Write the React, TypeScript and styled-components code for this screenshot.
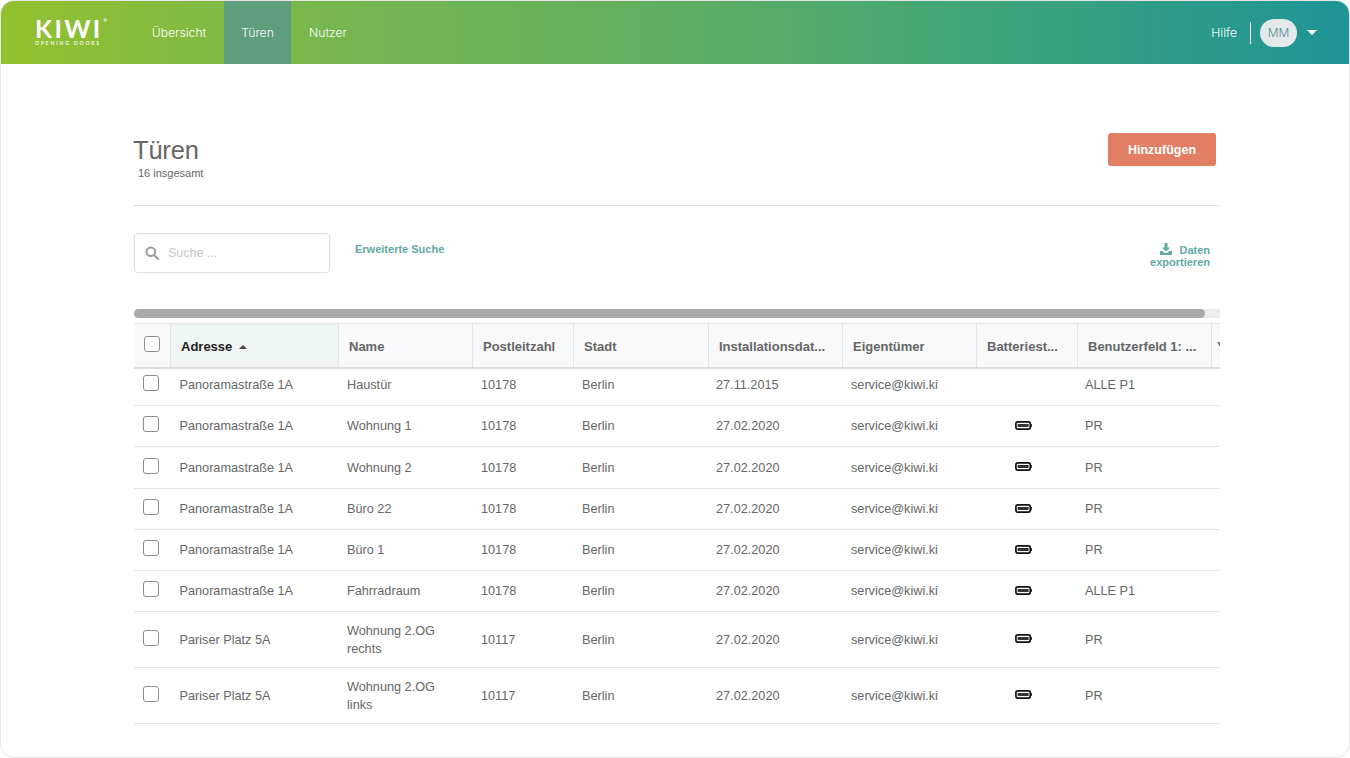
import React from "react";
import styled, { createGlobalStyle } from "styled-components";

const Global = createGlobalStyle`
  html, body { margin: 0; padding: 0; background: #fff; }
  * { box-sizing: border-box; }
  body { font-family: "Liberation Sans", Arial, sans-serif; }
`;

const Frame = styled.div`
  width: 1350px;
  height: 758px;
  border: 1px solid #e6e6e6;
  border-radius: 14px;
  overflow: hidden;
  background: #fff;
  display: flex;
  flex-direction: column;
`;

const Header = styled.header`
  flex: none;
  height: 63px;
  background: linear-gradient(90deg, #93c12f 0%, #76b64f 25%, #60ae62 50%, #3ca47b 75%, #1e9497 100%);
  display: flex;
  align-items: stretch;
  padding-left: 34px;
  padding-right: 32px;
  font-family: "Inter", "Lato", sans-serif;
  color: #fff;
  font-size: 12.2px;
  font-weight: 300;
`;

const Logo = styled.div`
  width: 99px;
  display: flex;
  flex-direction: column;
  padding-top: 15px;
`;

const LogoWord = styled.div`
  font-family: "Lato", sans-serif;
  font-size: 25px;
  line-height: 24px;
  font-weight: 700;
  letter-spacing: 2.3px;
  display: flex;
  align-items: flex-start;
  height: 24px;
`;

const LogoMark = styled.span`
  font-size: 4px;
  line-height: 10px;
  letter-spacing: 0;
  margin-left: 1px;
`;

const LogoTag = styled.div`
  font-family: "Lato", sans-serif;
  font-size: 5px;
  line-height: 6px;
  font-weight: 700;
  letter-spacing: 1.85px;
  white-space: nowrap;
  opacity: 0.9;
`;

const Nav = styled.nav`
  display: flex;
`;

const NavItem = styled.a<{ $active?: boolean; $width: number }>`
  display: flex;
  align-items: center;
  justify-content: center;
  width: ${(p) => p.$width}px;
  background: ${(p) => (p.$active ? "#5e9e7c" : "transparent")};
`;

const HeaderRight = styled.div`
  margin-left: auto;
  display: flex;
  align-items: center;
`;

const Divider = styled.span`
  width: 1px;
  height: 22px;
  background: #fff;
  margin: 0 9px 0 13px;
`;

const Avatar = styled.div`
  width: 37px;
  height: 28px;
  border-radius: 14px;
  background: #e6e9e9;
  color: #4f8f92;
  display: flex;
  align-items: center;
  justify-content: center;
  font-size: 12px;
`;

const Caret = styled.span`
  margin-left: 10px;
  width: 0;
  height: 0;
  border-left: 5px solid transparent;
  border-right: 5px solid transparent;
  border-top: 5px solid #fff;
`;

const Main = styled.main`
  margin-left: 133px;
  width: 1086px;
  padding-top: 69px;
  color: #666;
`;

const TitleRow = styled.div`
  display: flex;
  justify-content: space-between;
  height: 73px;
  border-bottom: 1px solid #dfdfdf;
`;

const Title = styled.h1`
  margin: 0 0 0 -1px;
  font-size: 25.5px;
  line-height: 34px;
  font-weight: 400;
  color: #666;
  letter-spacing: -0.2px;
`;

const Count = styled.div`
  margin-left: 4px;
  font-size: 11px;
  line-height: 13px;
  color: #666;
`;

const AddButton = styled.button`
  width: 108px;
  height: 33px;
  margin-right: 4px;
  border: 0;
  border-radius: 3px;
  background: #e17e63;
  color: #fff;
  font: bold 12.5px "Liberation Sans", Arial, sans-serif;
`;

const Tools = styled.div`
  display: flex;
  align-items: flex-start;
  padding-top: 27px;
  height: 103px;
`;

const SearchBox = styled.div`
  width: 196px;
  height: 40px;
  border: 1px solid #dedede;
  border-radius: 4px;
  display: flex;
  align-items: center;
  padding-left: 10px;
  gap: 9px;
  color: #c4c4c4;
  font-size: 12.5px;
`;

const AdvancedLink = styled.a`
  margin-left: 25px;
  margin-top: 9px;
  font-size: 11px;
  line-height: 14px;
  font-weight: 700;
  color: #5fa9a3;
`;

const ExportLink = styled.a`
  margin-left: auto;
  margin-right: 10px;
  margin-top: 10px;
  width: 70px;
  text-align: right;
  font-size: 11px;
  line-height: 11.5px;
  font-weight: 700;
  color: #5fa9a3;
`;

const ExportIcon = styled.svg`
  vertical-align: -1px;
  margin-right: 7px;
`;

const ScrollTrack = styled.div`
  height: 9px;
  border-radius: 5px 0 0 5px;
  background: #ececec;
`;

const ScrollThumb = styled.div`
  width: 1071px;
  height: 9px;
  border-radius: 5px;
  background: #a9a9a9;
`;

const TableClip = styled.div`
  margin-top: 5px;
  overflow: hidden;
`;

const columns = "37px 168px 134px 101px 135px 134px 134px 101px 134px 40px";

const HeadRow = styled.div`
  display: grid;
  grid-template-columns: ${columns};
  width: 1218px;
  height: 46px;
  background: #f8f9fa;
  border-top: 1px solid #e6e6e6;
  border-bottom: 2px solid #dedede;
`;

const HeadCell = styled.div<{ $sorted?: boolean; $pad?: number }>`
  display: flex;
  align-items: center;
  gap: 7px;
  padding: 2px 0 0 ${(p) => p.$pad ?? 10}px;
  border-right: 1px solid #e2e5e6;
  background: ${(p) => (p.$sorted ? "#eef5f3" : "transparent")};
  color: ${(p) => (p.$sorted ? "#222" : "#666")};
  font-size: 13px;
  font-weight: 700;
  white-space: nowrap;
  overflow: hidden;
`;

const CheckHeadCell = styled.div`
  padding: 12px 0 0 10px;
  border-right: 1px solid #e2e5e6;
`;

const SortCaret = styled.span`
  width: 0;
  height: 0;
  border-left: 4px solid transparent;
  border-right: 4px solid transparent;
  border-bottom: 4px solid #444;
`;

const Box = styled.span`
  display: block;
  width: 16px;
  height: 16px;
  border: 1px solid #8c8c8c;
  border-radius: 3px;
  background: #fff;
`;

const Row = styled.div<{ $h: number; $first?: boolean }>`
  display: grid;
  grid-template-columns: ${columns};
  width: 1218px;
  height: ${(p) => p.$h}px;
  padding-bottom: ${(p) => (p.$first ? 4 : 0)}px;
  border-bottom: 1px solid #e6e6e6;
  align-items: center;
  font-size: 12.7px;
  line-height: 18px;
  color: #666;
`;

const Cell = styled.div<{ $pad?: number }>`
  padding: 0 30px 0 ${(p) => p.$pad ?? 8}px;
`;

const CheckCell = styled.div`
  padding: 0 0 4px 9px;
`;

const BatteryCell = styled.div`
  display: flex;
  justify-content: center;
  padding: 0 8px 2px 0;
`;

const Battery = () => (
  <svg width="17" height="9" viewBox="0 0 17 9">
    <rect x="0.9" y="0.9" width="14.4" height="7.2" rx="2" fill="#fff" stroke="#111" strokeWidth="1.7" />
    <rect x="2.6" y="3" width="11" height="3" fill="#333" />
    <rect x="15.6" y="3" width="1.2" height="3" fill="#111" />
  </svg>
);

const rows = [
  ["Panoramastraße 1A", "Haustür", "10178", "27.11.2015", false, "ALLE P1", 37],
  ["Panoramastraße 1A", "Wohnung 1", "10178", "27.02.2020", true, "PR", 41],
  ["Panoramastraße 1A", "Wohnung 2", "10178", "27.02.2020", true, "PR", 42],
  ["Panoramastraße 1A", "Büro 22", "10178", "27.02.2020", true, "PR", 41],
  ["Panoramastraße 1A", "Büro 1", "10178", "27.02.2020", true, "PR", 41],
  ["Panoramastraße 1A", "Fahrradraum", "10178", "27.02.2020", true, "ALLE P1", 41],
  ["Pariser Platz 5A", "Wohnung 2.OG rechts", "10117", "27.02.2020", true, "PR", 56],
  ["Pariser Platz 5A", "Wohnung 2.OG links", "10117", "27.02.2020", true, "PR", 56],
] as const;

export default function App() {
  return (
    <Frame>
      <Global />
      <Header>
        <Logo>
          <LogoWord>
            KIWI<LogoMark>®</LogoMark>
          </LogoWord>
          <LogoTag>OPENING DOORS</LogoTag>
        </Logo>
        <Nav>
          <NavItem $width={90}>Übersicht</NavItem>
          <NavItem $width={67} $active>
            Türen
          </NavItem>
          <NavItem $width={74}>Nutzer</NavItem>
        </Nav>
        <HeaderRight>
          <span>Hilfe</span>
          <Divider />
          <Avatar>MM</Avatar>
          <Caret />
        </HeaderRight>
      </Header>
      <Main>
        <TitleRow>
          <div>
            <Title>Türen</Title>
            <Count>16 insgesamt</Count>
          </div>
          <AddButton>Hinzufügen</AddButton>
        </TitleRow>
        <Tools>
          <SearchBox>
            <svg width="14" height="14" viewBox="0 0 14 14" fill="none" stroke="#9a9a9a" strokeWidth="2">
              <circle cx="5.8" cy="5.8" r="4.3" />
              <path d="M9 9l4 4" strokeLinecap="round" />
            </svg>
            Suche ...
          </SearchBox>
          <AdvancedLink>Erweiterte Suche</AdvancedLink>
          <ExportLink>
            <ExportIcon width="12" height="12" viewBox="0 0 12 12" fill="#5fa9a3">
              <path d="M4.5 0h3v4.5H10L6 8.5 2 4.5h2.5z" />
              <path d="M0 8h2.5L4 9.7h4L9.5 8H12v4H0z" />
            </ExportIcon>
            Daten exportieren
          </ExportLink>
        </Tools>
        <ScrollTrack>
          <ScrollThumb />
        </ScrollTrack>
        <TableClip>
          <HeadRow>
            <CheckHeadCell>
              <Box />
            </CheckHeadCell>
            <HeadCell $sorted>
              Adresse <SortCaret />
            </HeadCell>
            <HeadCell>Name</HeadCell>
            <HeadCell>Postleitzahl</HeadCell>
            <HeadCell>Stadt</HeadCell>
            <HeadCell>Installationsdat...</HeadCell>
            <HeadCell>Eigentümer</HeadCell>
            <HeadCell>Batteriest...</HeadCell>
            <HeadCell>Benutzerfeld 1: ...</HeadCell>
            <HeadCell $pad={5}>Y</HeadCell>
          </HeadRow>
          {rows.map((r, i) => (
            <Row key={i} $h={r[6]} $first={i === 0}>
              <CheckCell>
                <Box />
              </CheckCell>
              <Cell $pad={8.5}>{r[0]}</Cell>
              <Cell>{r[1]}</Cell>
              <Cell>{r[2]}</Cell>
              <Cell>Berlin</Cell>
              <Cell $pad={7}>{r[3]}</Cell>
              <Cell>service@kiwi.ki</Cell>
              <BatteryCell>{r[4] ? <Battery /> : null}</BatteryCell>
              <Cell $pad={7}>{r[5]}</Cell>
              <Cell />
            </Row>
          ))}
        </TableClip>
      </Main>
    </Frame>
  );
}
